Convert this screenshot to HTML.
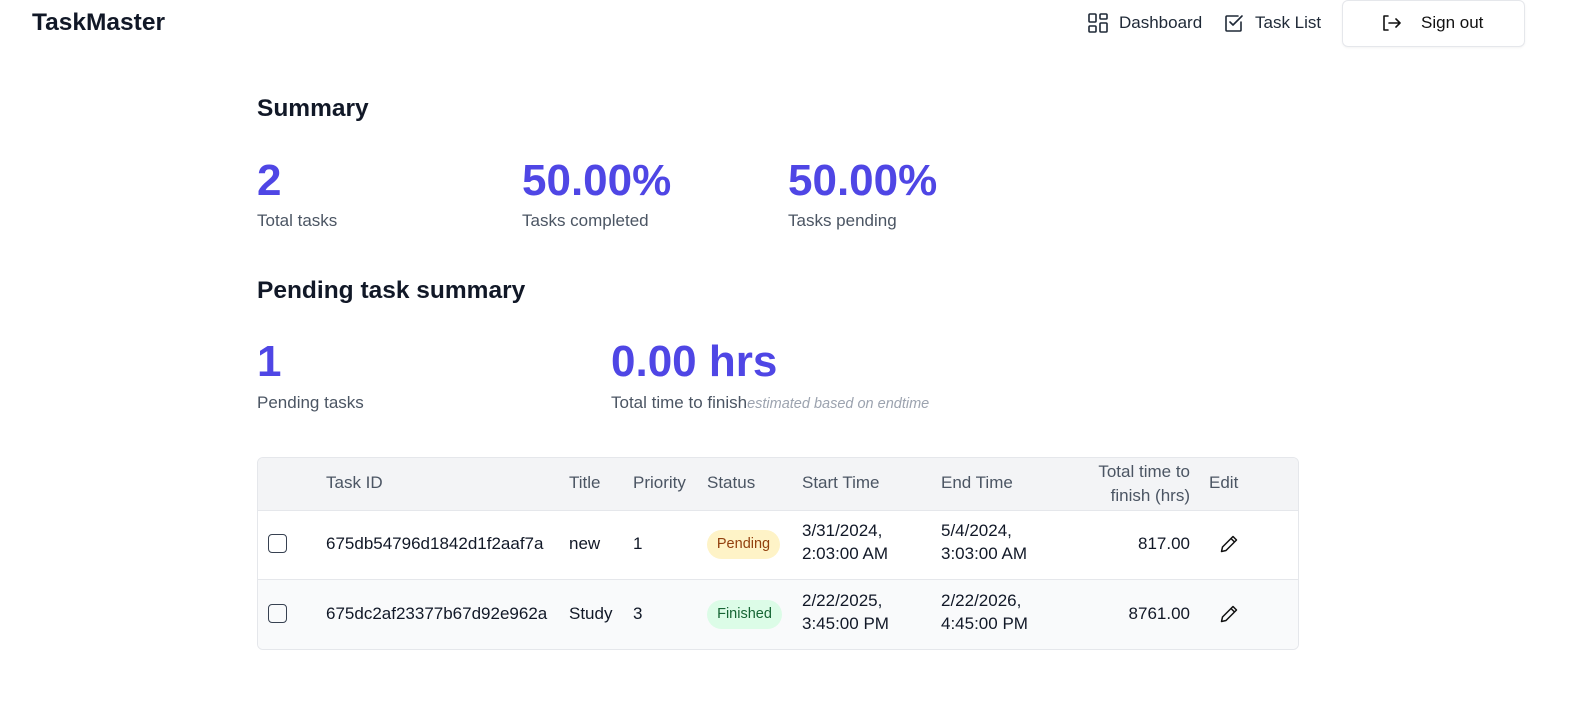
<!DOCTYPE html>
<html><head><style>
*{margin:0;padding:0;box-sizing:border-box}
body{width:1595px;height:717px;background:#fff;font-family:"Liberation Sans",sans-serif;position:relative;overflow:hidden;color:#111827}
.a{position:absolute;white-space:nowrap}
.h{font-size:24.5px;font-weight:bold;line-height:28px;color:#111827}
.big{font-size:44px;font-weight:bold;line-height:48px;color:#4f46e5}
.lbl{font-size:17px;line-height:24px;color:#4b5563}
.nav{font-size:17px;line-height:24px;color:#1f2937}
.th{font-size:17px;line-height:22px;color:#4b5563}
.td{font-size:17px;line-height:22px;color:#111827}
.cb{position:absolute;width:19px;height:19px;border:1.5px solid #374151;border-radius:4px}
.pill{position:absolute;height:29px;border-radius:15px;font-size:14.5px;line-height:29px;text-align:center}
</style></head><body>
<div class="a h" style="left:32px;top:9px">TaskMaster</div>

<svg class="a" style="left:1088px;top:13px" width="20" height="20" viewBox="0 0 20 20" fill="none" stroke="#1f2937" stroke-width="1.6"><rect x="1" y="1" width="7" height="8" rx="1"/><rect x="12" y="1" width="7" height="5" rx="1"/><rect x="1" y="13" width="7" height="6" rx="1"/><rect x="12" y="10" width="7" height="9" rx="1"/></svg>
<div class="a nav" style="left:1119px;top:11px">Dashboard</div>
<svg class="a" style="left:1224px;top:13px" width="20" height="20" viewBox="0 0 20 20" fill="none" stroke="#1f2937" stroke-width="1.6" stroke-linecap="round" stroke-linejoin="round"><path d="M17 9v8a1 1 0 0 1-1 1H3a1 1 0 0 1-1-1V4a1 1 0 0 1 1-1h11"/><path d="M6 9l3 3 9-9"/></svg>
<div class="a nav" style="left:1255px;top:11px">Task List</div>
<div class="a" style="left:1342px;top:0;width:183px;height:47px;border:1px solid #e5e7eb;border-radius:6px;box-shadow:0 1px 2px rgba(0,0,0,.05)"></div>
<svg class="a" style="left:1382px;top:14px" width="20" height="18" viewBox="0 0 20 18" fill="none" stroke="#111" stroke-width="1.6" stroke-linecap="round" stroke-linejoin="round"><path d="M6 2H2v14h4"/><path d="M7 9h11M14 5l4 4-4 4"/></svg>
<div class="a nav" style="left:1421px;top:11px;color:#111">Sign out</div>

<div class="a h" style="left:257px;top:95px">Summary</div>
<div class="a big" style="left:257px;top:157px">2</div>
<div class="a lbl" style="left:257px;top:209px">Total tasks</div>
<div class="a big" style="left:522px;top:157px">50.00%</div>
<div class="a lbl" style="left:522px;top:209px">Tasks completed</div>
<div class="a big" style="left:788px;top:157px">50.00%</div>
<div class="a lbl" style="left:788px;top:209px">Tasks pending</div>

<div class="a h" style="left:257px;top:277px">Pending task summary</div>
<div class="a big" style="left:257px;top:338px">1</div>
<div class="a lbl" style="left:257px;top:391px">Pending tasks</div>
<div class="a big" style="left:611px;top:338px">0.00 hrs</div>
<div class="a lbl" style="left:611px;top:391px">Total time to finish<i style="font-size:14.5px;color:#9ca3af">estimated based on endtime</i></div>

<div class="a" style="left:257px;top:457px;width:1042px;height:193px;border:1px solid #e5e7eb;border-radius:6px;overflow:hidden">
<div style="height:53px;background:#f3f4f6;border-bottom:1px solid #e5e7eb"></div>
<div style="height:69px;background:#fff;border-bottom:1px solid #e5e7eb"></div>
<div style="height:70px;background:#f9fafb"></div>
</div>
<div class="a th" style="left:326px;top:472px">Task ID</div>
<div class="a th" style="left:569px;top:472px">Title</div>
<div class="a th" style="left:633px;top:472px">Priority</div>
<div class="a th" style="left:707px;top:472px">Status</div>
<div class="a th" style="left:802px;top:472px">Start Time</div>
<div class="a th" style="left:941px;top:472px">End Time</div>
<div class="a th" style="left:1090px;top:460px;width:100px;text-align:right;line-height:24px">Total time to<br>finish (hrs)</div>
<div class="a th" style="left:1209px;top:472px">Edit</div>

<div class="cb" style="left:268px;top:534px"></div>
<div class="a td" style="left:326px;top:533px">675db54796d1842d1f2aaf7a</div>
<div class="a td" style="left:569px;top:533px">new</div>
<div class="a td" style="left:633px;top:533px">1</div>
<div class="pill" style="left:707px;top:530px;width:73px;background:#fef3c7;color:#92400e">Pending</div>
<div class="a td" style="left:802px;top:519px;line-height:23px">3/31/2024,<br>2:03:00 AM</div>
<div class="a td" style="left:941px;top:519px;line-height:23px">5/4/2024,<br>3:03:00 AM</div>
<div class="a td" style="left:1060px;top:533px;width:130px;text-align:right">817.00</div>
<svg class="a" style="left:1219px;top:534px" width="20" height="20" viewBox="0 0 20 20" fill="none" stroke="#111" stroke-width="1.5" stroke-linejoin="round"><path d="M14 2.5l3.5 3.5L7 16.5l-4.5 1 1-4.5z"/><path d="M12 4.5l3.5 3.5"/></svg>

<div class="cb" style="left:268px;top:604px"></div>
<div class="a td" style="left:326px;top:603px">675dc2af23377b67d92e962a</div>
<div class="a td" style="left:569px;top:603px">Study</div>
<div class="a td" style="left:633px;top:603px">3</div>
<div class="pill" style="left:707px;top:600px;width:75px;background:#dcfce7;color:#166534">Finished</div>
<div class="a td" style="left:802px;top:589px;line-height:23px">2/22/2025,<br>3:45:00 PM</div>
<div class="a td" style="left:941px;top:589px;line-height:23px">2/22/2026,<br>4:45:00 PM</div>
<div class="a td" style="left:1060px;top:603px;width:130px;text-align:right">8761.00</div>
<svg class="a" style="left:1219px;top:604px" width="20" height="20" viewBox="0 0 20 20" fill="none" stroke="#111" stroke-width="1.5" stroke-linejoin="round"><path d="M14 2.5l3.5 3.5L7 16.5l-4.5 1 1-4.5z"/><path d="M12 4.5l3.5 3.5"/></svg>
</body></html>
